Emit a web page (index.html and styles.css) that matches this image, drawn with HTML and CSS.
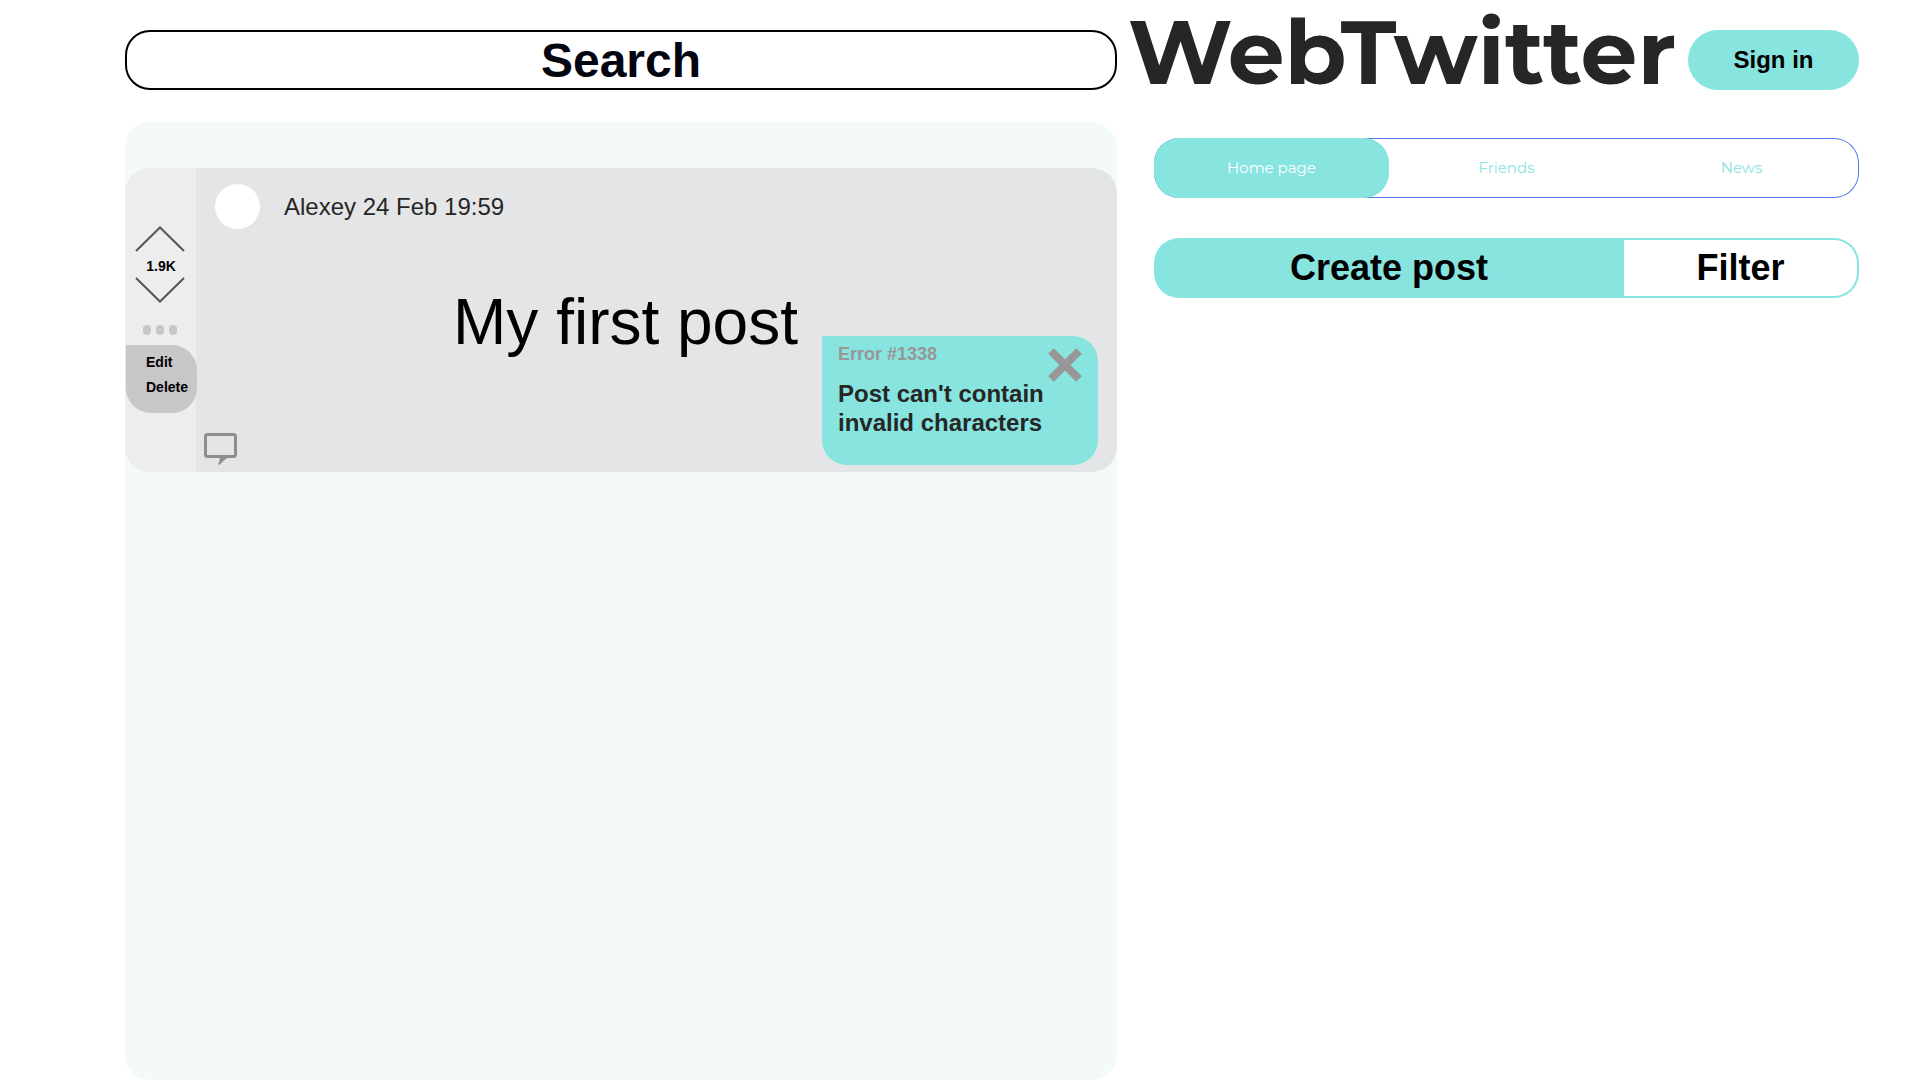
FILE: index.html
```html
<!DOCTYPE html>
<html lang="en">
<head>
<meta charset="utf-8">
<meta name="viewport" content="width=device-width, initial-scale=1">
<title>WebTwitter</title>
<link rel="stylesheet" href="styles.css">
</head>
<body>
<div class="page">
  <main class="main">
    <form class="search" role="search">
      <input class="search-input" type="text" placeholder="Search" aria-label="Search">
    </form>
    <section class="feed">
      <article class="post">
        <aside class="post-side">
          <button class="vote" type="button" aria-label="Vote up">
            <svg width="50" height="26" viewBox="0 0 50 26"><path d="M1 25 25 1.500 49 25"/></svg>
          </button>
          <span class="rating">1.9K</span>
          <button class="vote" type="button" aria-label="Vote down">
            <svg width="50" height="26" viewBox="0 0 50 26"><path d="M1 1 25 24.500 49 1"/></svg>
          </button>
          <button class="dots" type="button" aria-label="Post actions"><i></i><i></i><i></i></button>
          <div class="menu">
            <button class="menu-item" type="button">Edit</button>
            <button class="menu-item" type="button">Delete</button>
          </div>
        </aside>
        <div class="post-body">
          <header class="post-head">
            <span class="avatar"></span>
            <span class="author">Alexey 24 Feb 19:59</span>
          </header>
          <p class="post-text">My first post</p>
          <button class="comment" type="button" aria-label="Comments">
            <svg width="33" height="32" viewBox="0 0 33 32"><rect x="1.500" y="1.500" width="30" height="22" rx="2"/><path class="tail" d="M16 24h9c-3 1.500-6 4-9 7.500h-2c1-2 1.700-4.500 2-7.500z"/></svg>
          </button>
        </div>
        <div class="error" role="alert">
          <div class="error-content">
            <p class="error-code">Error #1338</p>
            <p class="error-text">Post can't contain invalid characters</p>
          </div>
          <button class="close" type="button" aria-label="Close">
            <svg width="34" height="34" viewBox="0 0 34 34"><path d="M3 3 31 31M31 3 3 31"/></svg>
          </button>
        </div>
      </article>
    </section>
  </main>
  <div class="side">
    <header class="brand">
      <h1 class="logo">WebTwitter</h1>
      <button class="sign-in" type="button">Sign in</button>
    </header>
    <nav class="tabs">
      <a class="tab tab-active" href="#">Home page</a>
      <a class="tab" href="#">Friends</a>
      <a class="tab" href="#">News</a>
    </nav>
    <div class="actions">
      <button class="create" type="button">Create post</button>
      <button class="filter" type="button">Filter</button>
    </div>
  </div>
</div>
</body>
</html>
```
FILE: styles.css
```css
* {
  box-sizing: border-box;
}

body {
  margin: 0;
  background: #fff;
  font-family: "Liberation Sans", Arial, sans-serif;
  color: #000;
}

h1, p {
  margin: 0;
}

button {
  padding: 0;
  border: 0;
  background: none;
  font: inherit;
  color: inherit;
  cursor: pointer;
}

svg {
  display: block;
  fill: none;
}

.page {
  display: grid;
  grid-template-columns: minmax(0, 992fr) minmax(0, 742fr);
  min-height: 100vh;
  padding: 30px 61px 0 125px;
}

.main {
  display: flex;
  flex-direction: column;
  gap: 32px;
}

.search {
  display: flex;
}

.search-input {
  width: 100%;
  height: 60px;
  padding: 0 24px;
  border: 2px solid #000;
  border-radius: 25px;
  background: #fff;
  font: bold 48px/56px "Liberation Sans", Arial, sans-serif;
  text-align: center;
}

.search-input::placeholder {
  color: #02040f;
  opacity: 1;
}

.feed {
  flex: 1;
  padding: 46px 0;
  border-radius: 25px;
  background: #f4fafa;
}

.post {
  position: relative;
  display: flex;
  min-height: 304px;
  border-radius: 25px;
  background: #e4e5e7;
}

.post-side {
  display: flex;
  flex-direction: column;
  align-items: center;
  width: 71px;
  padding: 58px 1px 0 0;
  border-radius: 25px 0 0 25px;
  background: #ededed;
}

.vote svg {
  stroke: #555;
  stroke-width: 2;
}

.rating {
  padding: 6px 0 3px 2px;
  font-weight: bold;
  font-size: 14px;
  line-height: 16px;
}

.dots {
  display: flex;
  gap: 5px;
  padding: 22px 0 10px;
}

.dots i {
  width: 8px;
  height: 10px;
  border-radius: 4px;
  background: #c8c6c7;
}

.menu {
  display: flex;
  flex-direction: column;
  align-items: flex-start;
  gap: 9px;
  align-self: flex-start;
  width: 71px;
  height: 68px;
  margin-left: 1px;
  padding: 9px 0 0 20px;
  border-radius: 0 25px 25px 25px;
  background: #c8c6c7;
  font-weight: bold;
  font-size: 14px;
  line-height: 16px;
}

.post-body {
  display: flex;
  flex: 1;
  flex-direction: column;
  padding: 16px 19px 7px;
}

.post-head {
  display: flex;
  align-items: center;
  gap: 24px;
}

.avatar {
  width: 45px;
  height: 45px;
  border-radius: 50%;
  background: #fff;
}

.author {
  font-size: 24px;
  line-height: 28px;
  color: #262626;
}

.post-text {
  flex: 1;
  padding: 55px 62px 0 0;
  font-size: 64px;
  line-height: 76px;
  text-align: center;
}

.comment {
  align-self: flex-start;
  margin-left: -11px;
}

.comment svg {
  stroke: #8e8c8d;
  stroke-width: 3;
}

.comment .tail {
  fill: #8e8c8d;
  stroke: none;
}

.error {
  position: absolute;
  right: 19px;
  bottom: 7px;
  display: flex;
  width: 276px;
  height: 129px;
  padding: 8px 16px;
  border-radius: 0 25px 25px 25px;
  background: #87e4df;
  font-weight: bold;
}

.error-content {
  display: flex;
  flex: 1;
  flex-direction: column;
  gap: 15px;
}

.error-code {
  font-size: 18px;
  line-height: 20px;
  color: #979797;
}

.error-text {
  font-size: 24px;
  line-height: 29px;
  color: #262626;
}

.close {
  align-self: flex-start;
  padding-top: 4px;
}

.close svg {
  stroke: #979797;
  stroke-width: 8;
}

.brand {
  display: flex;
  align-items: flex-start;
  justify-content: space-between;
  height: 60px;
  padding-left: 11px;
}

.logo {
  font: bold 90px/44px Montserrat, Lato, sans-serif;
  color: #262626;
}

.sign-in {
  width: 171px;
  height: 60px;
  border-radius: 30px;
  background: #87e4df;
  font-weight: bold;
  font-size: 24px;
}

.tabs {
  display: flex;
  height: 60px;
  margin: 48px 0 40px 37px;
  border-radius: 25px;
  box-shadow: inset 0 0 0 1px #5577ef;
  font: 400 15px/60px Montserrat, Lato, sans-serif;
}

.tab {
  flex: 1;
  border-radius: 25px;
  color: #87e4df;
  text-align: center;
  text-decoration: none;
}

.tab-active {
  background: #87e4df;
  color: #fff;
}

.actions {
  display: grid;
  grid-template-columns: 2fr 1fr;
  height: 60px;
  margin-left: 37px;
  border-radius: 25px;
  font-weight: bold;
  font-size: 36px;
  line-height: 56px;
}

.create {
  border-radius: 25px 0 0 25px;
  background: #87e4df;
}

.filter {
  border: 2px solid #87e4df;
  border-left: 0;
  border-radius: 0 25px 25px 0;
}
```
